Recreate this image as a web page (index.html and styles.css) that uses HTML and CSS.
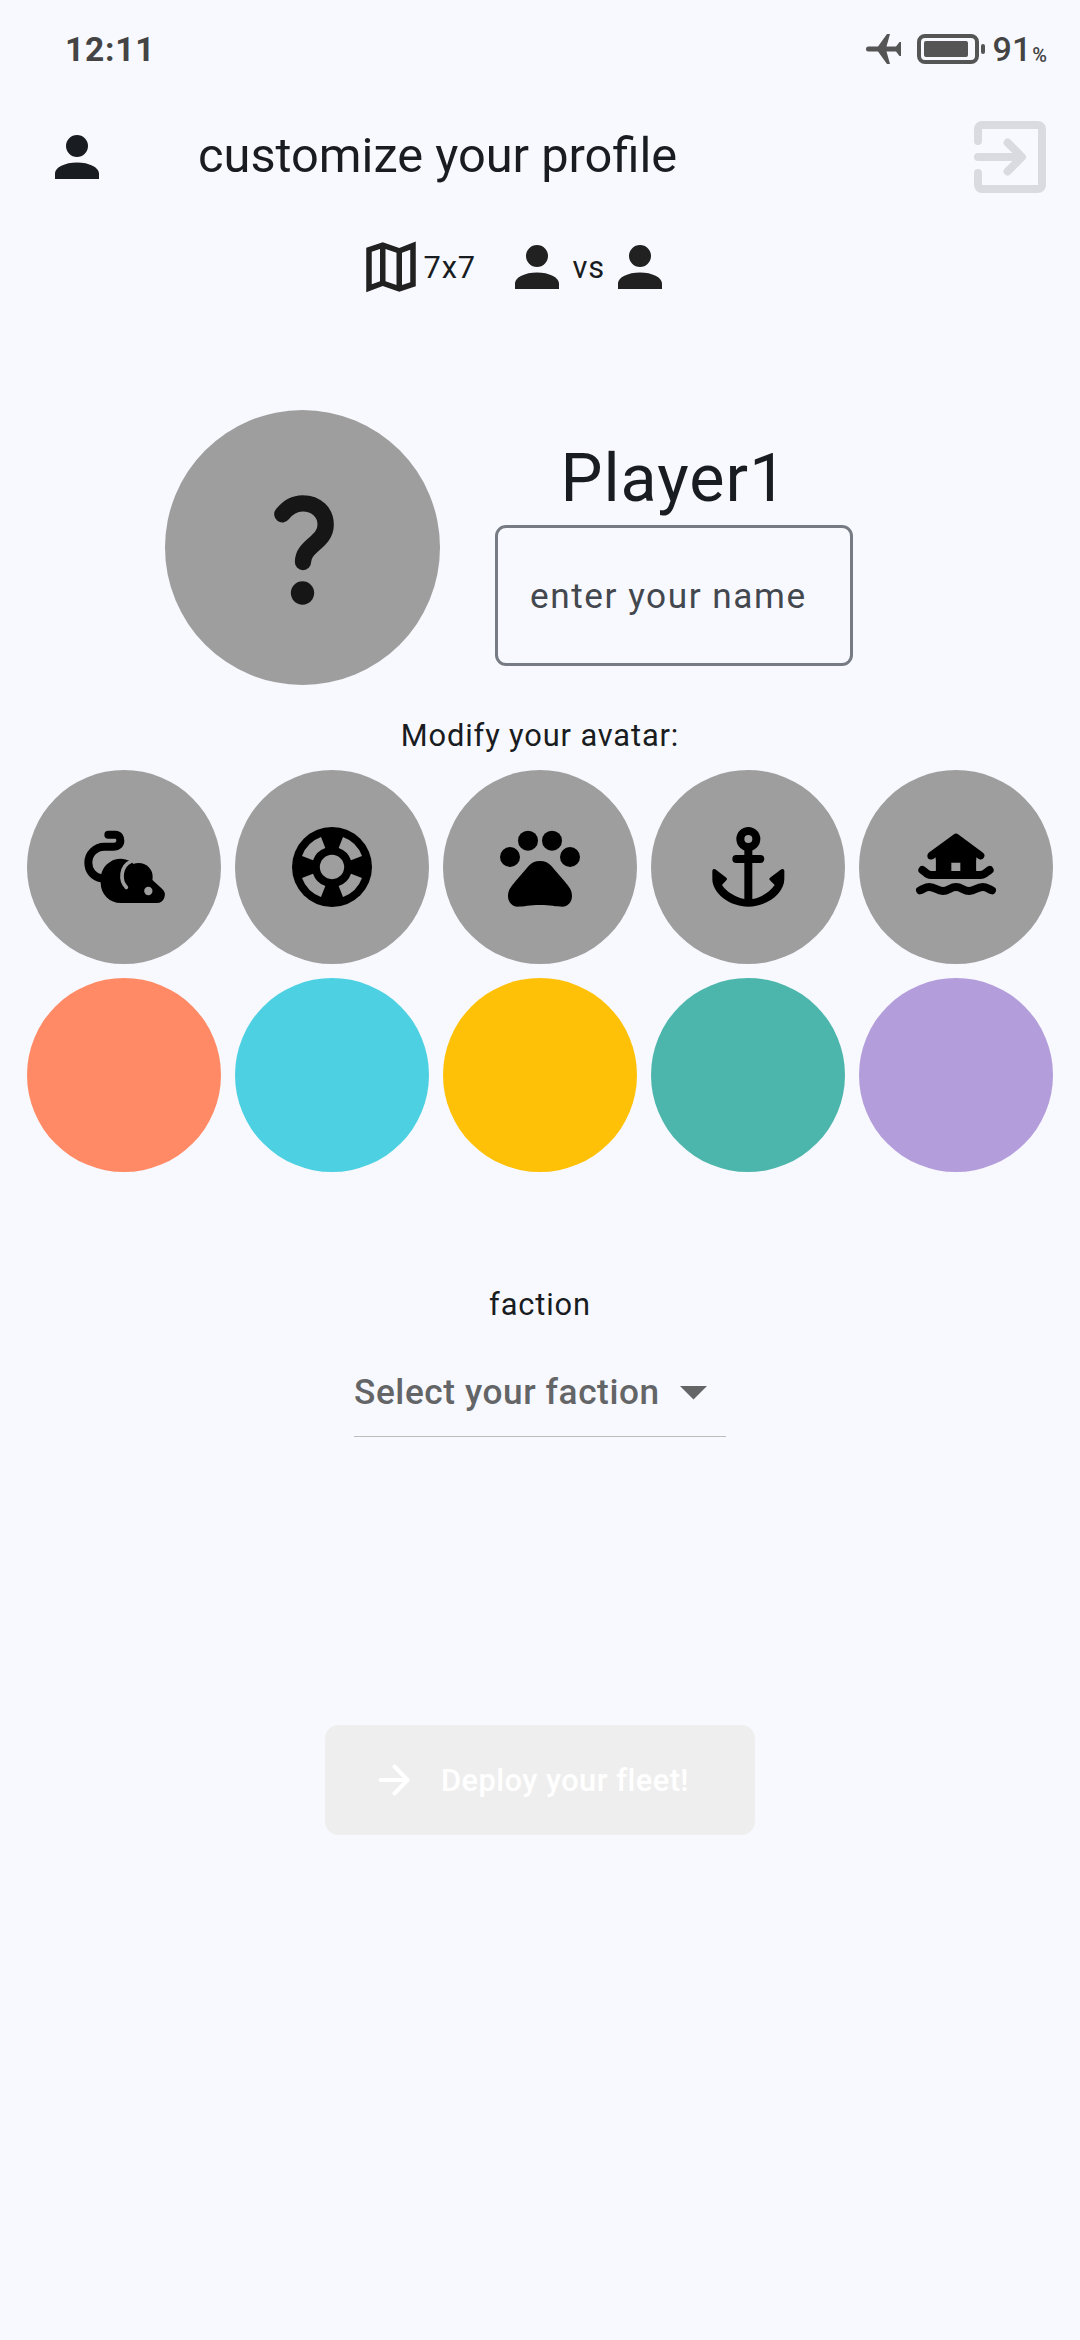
FILE: index.html
```html
<!DOCTYPE html>
<html lang="en">
<head>
<meta charset="utf-8">
<title>customize your profile</title>
<link rel="stylesheet" href="styles.css">
</head>
<body>
<svg class="defs" width="0" height="0" aria-hidden="true">
  <symbol id="person" viewBox="0 0 24 24"><path d="M12 4a4 4 0 1 1 0 8 4 4 0 0 1 0-8zM12 14c4.42 0 8 1.79 8 4v2H4v-2c0-2.21 3.58-4 8-4z"/></symbol>
</svg>
<header class="status">
  <span class="clock">12:11</span>
  <div class="status-right">
    <svg class="plane" viewBox="0 0 35 30"><path d="M2.500 12.500H12L21 0H24L20.500 12.500H30L33.500 8H35V22H33.500L30 17.500H20.500L24 30H21L12 17.500H2.500A2.500 2.500 0 0 1 2.500 12.500Z"/></svg>
    <svg class="battery" viewBox="0 0 68 30"><rect x="2" y="2" width="58" height="26" rx="6" fill="none" stroke="#555" stroke-width="4"/><rect x="7" y="7" width="44" height="16" rx="2"/><rect x="64" y="10" width="4" height="10" rx="2"/></svg>
    <span class="level">91</span><span class="percent">%</span>
  </div>
</header>
<div class="appbar">
  <svg class="icon"><use href="#person"/></svg>
  <h1 class="title">customize your profile</h1>
  <svg class="exit" viewBox="0 0 24 24"><path d="M4 8V5a1 1 0 0 1 1-1h14a1 1 0 0 1 1 1v14a1 1 0 0 1-1 1H5a1 1 0 0 1-1-1v-3M4 12h10.500M11.400 8.400 15 12l-3.600 3.600"/></svg>
</div>
<main>
  <div class="match">
    <svg class="icon" viewBox="0 0 24 24"><path d="M15 5.100 9 3 3 5.020v16.200l6-2.330 6 2.100 6-2.020V2.770L15 5.100zm-5 .36 4 1.400v11.680l-4-1.400V5.460zm-5 .99 3-1.010v11.700l-3 1.160V6.450zm14 11.090-3 1.010V6.860l3-1.160v11.840z"/></svg>
    <span class="size">7x7</span>
    <svg class="icon"><use href="#person"/></svg>
    <span class="versus">vs</span>
    <svg class="icon"><use href="#person"/></svg>
  </div>
  <section class="profile">
    <div class="avatar">
      <svg viewBox="45 60 825 825"><path d="M397 373C414 351 432 340 458 340C500 340 527 368 527 404C527 458 459 466 459 516" fill="none" stroke="#161616" stroke-width="49" stroke-linecap="round"/><circle cx="457.500" cy="609" r="35" fill="#161616"/></svg>
    </div>
    <div class="identity">
      <div class="player">Player1</div>
      <div class="field">enter your name</div>
    </div>
  </section>
  <p class="label modify">Modify your avatar:</p>
  <div class="choices">
    <div class="choice gray"><svg viewBox="22 30 582 582">
      <path d="M266 224H287C298 224 302 233 302 242C302 253 294 260 283 260H255A48 48 0 0 0 206 308C206 333 222 351 245 355" fill="none" stroke="#000" stroke-width="24" stroke-linecap="round"/>
      <path d="M243 357A60 60 0 0 1 332 304L399 361 427 386A24.500 24.500 0 0 1 411 429H303A60 60 0 0 1 243 369Z"/><circle cx="357" cy="351" r="42"/>
      <path d="M334 304C302 318 300 362 320 382" fill="none" stroke="#9e9e9e" stroke-width="11" stroke-linecap="round"/><circle cx="386" cy="393" r="12.500" fill="#9e9e9e"/></svg></div>
    <div class="choice gray"><svg viewBox="646 30 582 582">
      <circle cx="937" cy="321" r="120"/>
      <g fill="#9e9e9e"><circle cx="937" cy="321" r="36.500"/>
      <path d="M904 231A96 96 0 0 0 847 288L880 301A60 60 0 0 1 917 264Z"/>
      <path d="M904 231A96 96 0 0 0 847 288L880 301A60 60 0 0 1 917 264Z" transform="rotate(90 937 321)"/>
      <path d="M904 231A96 96 0 0 0 847 288L880 301A60 60 0 0 1 917 264Z" transform="rotate(180 937 321)"/>
      <path d="M904 231A96 96 0 0 0 847 288L880 301A60 60 0 0 1 917 264Z" transform="rotate(270 937 321)"/></g></svg></div>
    <div class="choice gray"><svg viewBox="39 30 582 582">
      <circle cx="294" cy="242" r="30"/><circle cx="366" cy="242" r="30"/><circle cx="240" cy="291" r="30"/><circle cx="420" cy="291" r="30"/>
      <path d="M330 303C345 303 356 308 365 319C380 338 392 350 403 363C418 381 426 391 426 408C426 428 412 440 397 440C380 440 360 435 330 435C300 435 280 440 263 440C248 440 234 428 234 408C234 391 242 381 257 363C268 350 280 338 295 319C304 308 315 303 330 303Z"/></svg></div>
    <div class="choice gray"><svg viewBox="662 30 582 582">
      <g fill="none" stroke="#000" stroke-width="24"><circle cx="954" cy="237" r="24"/><path d="M918 297H990" stroke-linecap="round"/><path d="M954 264V425"/></g>
      <path d="M846 332Q847 325 855 328L888 353Q892 357 888 361L875 375C888 395 915 412 942 417H966C993 412 1020 395 1033 375L1019 361Q1015 357 1019 353L1053 328Q1061 325 1062 332V357C1062 400 1010 440 954 440C898 440 846 400 846 357Z"/></svg></div>
    <div class="choice gray"><svg viewBox="56 30 582 582">
      <path d="M273 287 347 233 420 287Z" stroke="#000" stroke-width="24" stroke-linejoin="round"/>
      <path d="M286 290H408V345H286Z"/>
      <path d="M279 297 286 292V332H262V299H273ZM415 297 408 292V332H432V299H420ZM333 308H360V333H333Z" fill="#9e9e9e"/>
      <g fill="none" stroke="#000" stroke-width="24" stroke-linecap="round"><path d="M246 330C256 336 258 345 272 345H420C434 345 438 336 448 330"/>
      <path d="M239 391C251 386 256 381 267 381C285 381 290 393 307 393C325 393 330 381 347 381C364 381 369 393 387 393C404 393 409 381 427 381C438 381 443 386 455 391"/></g></svg></div>
    <div class="choice coral"></div>
    <div class="choice cyan"></div>
    <div class="choice amber"></div>
    <div class="choice teal"></div>
    <div class="choice purple"></div>
  </div>
  <p class="label faction">faction</p>
  <div class="select"><span>Select your faction</span><svg viewBox="0 0 27 14"><path d="M0 0H27L13.500 13.500Z"/></svg></div>
  <button class="deploy"><svg viewBox="0 0 32 32"><path d="M2.500 16H29M16.500 2.500 29.500 16 16.500 29.500"/></svg><span>Deploy your fleet!</span></button>
</main>
</body>
</html>
```
FILE: styles.css
```css
* { box-sizing: border-box; margin: 0; padding: 0; }
body {
  width: 1080px;
  height: 2340px;
  background: #f8f9ff;
  color: #191c20;
  font-family: Roboto, sans-serif;
  overflow: hidden;
}
svg { display: block; flex: none; }
.defs { display: none; }
.status {
  display: flex;
  justify-content: space-between;
  align-items: center;
  height: 98px;
  padding: 0 34px 0 65px;
  color: #444;
}
.clock { font-size: 33.500px; font-weight: 700; line-height: 40px; padding-top: 2px; letter-spacing: 0.800px; }
.status-right { display: flex; align-items: center; }
.plane { width: 35px; height: 30px; fill: #555; margin-right: 16px; }
.battery { width: 68px; height: 30px; fill: #555; margin-right: 8px; }
.level { font-size: 34px; font-weight: 500; line-height: 40px; margin-right: 1px; }
.percent { font-size: 20px; font-weight: 500; line-height: 24px; padding-top: 12px; margin-right: -1px; }
.appbar { display: flex; align-items: center; height: 118px; padding: 0 22px 0 44px; }
.appbar .icon { fill: #191c20; }
.icon { width: 66px; height: 66px; fill: #212121; }
.title { flex: 1; margin: -3px 0 0 88px; font-size: 48.750px; font-weight: 400; line-height: 60px; }
.exit { width: 96px; height: 96px; fill: none; stroke: #dadbe0; stroke-width: 2; stroke-linecap: round; stroke-linejoin: round; }
.match {
  display: flex;
  align-items: center;
  height: 102px;
  padding-left: 357.500px;
  font-size: 30.800px;
  letter-spacing: 0.850px;
}
.size { width: 80px; }
.versus { width: 37.500px; padding-left: 3px; }
.profile { display: flex; gap: 55px; margin-top: 92px; padding-left: 165px; }
.avatar { width: 275px; height: 275px; border-radius: 50%; background: #9e9e9e; }
.identity { width: 358px; padding-top: 30px; }
.player { height: 77px; margin-bottom: 8px; font-size: 66.500px; line-height: 77px; text-align: center; letter-spacing: 1px; }
.field {
  display: flex;
  align-items: center;
  height: 141px;
  padding-left: 32px;
  border: 3px solid #777b83;
  border-radius: 11px;
  color: #43474e;
  font-size: 35.200px;
  letter-spacing: 1.540px;
}
.label { text-align: center; font-size: 30.800px; letter-spacing: 0.870px; }
.modify { margin-top: 16px; line-height: 70px; }
.choices { display: grid; grid-template-columns: repeat(5, 194px); justify-content: space-between; row-gap: 13.700px; margin-top: -1px; padding: 0 27.300px; }
.choice { height: 194px; border-radius: 50%; }
.gray { background: #9e9e9e; }
.coral { background: #ff8a65; }
.cyan { background: #4dd0e1; }
.amber { background: #ffc107; }
.teal { background: #4db6ac; }
.purple { background: #b39ddb; }
.faction { margin-top: 113px; line-height: 40px; }
.select {
  display: flex;
  align-items: center;
  justify-content: space-between;
  width: 372px;
  height: 90px;
  margin: 22px auto 0;
  padding-right: 19px;
  border-bottom: 1px solid #bdbdbd;
  color: #646567;
  font-size: 35.200px;
  font-weight: 500;
  letter-spacing: 0.590px;
}
.select span { padding-top: 2px; }
.select svg { width: 27px; height: 14px; margin-top: 3px; fill: #646567; }
.deploy {
  display: flex;
  align-items: center;
  width: 430px;
  height: 110px;
  margin: 288px auto 0;
  padding-left: 53px;
  border: 0;
  border-radius: 14px;
  background: #eee;
  color: #fff;
  font: 500 30.800px Roboto, sans-serif;
  letter-spacing: 0.450px;
}
.deploy span { padding-top: 1px; }
.deploy svg { width: 32px; height: 32px; margin-right: 31px; fill: none; stroke: #fff; stroke-width: 4; stroke-linecap: round; stroke-linejoin: round; }
```
